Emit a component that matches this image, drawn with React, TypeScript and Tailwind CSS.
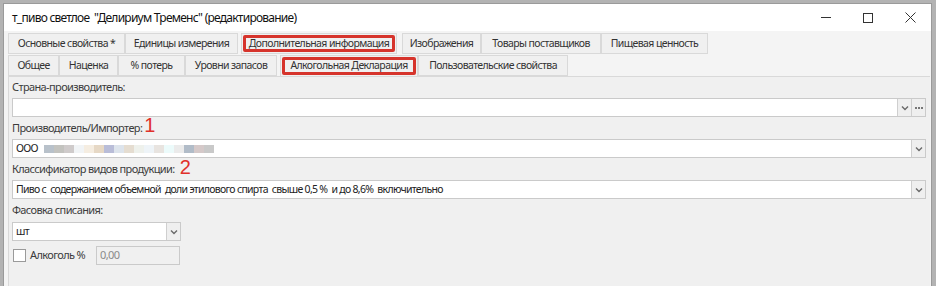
import React from "react";

const font = { fontFamily: '"Noto Sans", "Open Sans", sans-serif' };

function Tab({ label, w, active, marked }: { label: string; w: number; active?: boolean; marked?: boolean }) {
  return (
    <div
      style={{ width: w }}
      className={
        "relative flex h-full shrink-0 items-center justify-center whitespace-nowrap border border-[#d9d9d9] bg-[#f0f0f0] text-[10.5px] tracking-[-0.6px] text-[#333] " +
        (active ? "border-b-0" : "")
      }
    >
      {label}
      {marked && (
        <div className="absolute inset-x-[1px] inset-y-[1px] rounded-[2px] border-[3px] border-[#d6342c]" />
      )}
    </div>
  );
}

function DropBtn() {
  return (
    <div className="flex w-[14px] shrink-0 items-center justify-center border-l border-[#cfcfcf] bg-[#efefef]">
      <svg width="8" height="6" viewBox="0 0 8 6">
        <path d="M1 1.5 L4 4.5 L7 1.5" fill="none" stroke="#6a6a6a" strokeWidth="1.4" />
      </svg>
    </div>
  );
}

function Field({ children, extra }: { children?: React.ReactNode; extra?: boolean }) {
  return (
    <div className="flex h-[19px] border border-[#cacaca] bg-white">
      <div className="flex flex-1 items-center whitespace-nowrap pl-[3px] text-[10.5px] tracking-[-0.7px] text-[#222]">{children}</div>
      <DropBtn />
      {extra && (
        <div className="flex w-[14px] shrink-0 items-center justify-center gap-[1px] border-l border-[#cfcfcf] bg-[#efefef]">
          <span className="h-[2px] w-[2px] bg-[#777]" />
          <span className="h-[2px] w-[2px] bg-[#777]" />
          <span className="h-[2px] w-[2px] bg-[#777]" />
        </div>
      )}
    </div>
  );
}

const blur = [
  "#b8c1ca", "#c3c3bf", "#cfcbcb", "#f1f4f6", "#f5ede1", "#e6d8c5", "#b9bdd8", "#dde4ec",
  "#e5ddd1", "#eef1ec", "#eef4f8", "#e8e4e0", "#ecfbfb", "#ebebeb", "#b1bcc8", "#d5c9c9", "#c9c9c9",
];

export default function App() {
  return (
    <div style={font} className="h-[286px] w-[936px] overflow-hidden bg-[#b3b3b3] pl-[3px] pt-[3px]">
      <div className="flex h-[283px] w-[929px] flex-col border-l border-r border-t border-[#9a9a9a] bg-white">
        {/* title bar */}
        <div className="flex h-[27px] shrink-0 items-center bg-white pl-[8px] text-[12px] tracking-[-0.75px] text-[#111]">
          <span className="flex-1">т_пиво светлое&nbsp; "Делириум Тременс" (редактирование)</span>
          <div className="flex h-full items-center">
            <div className="flex w-[42px] justify-center">
              <div className="h-[1px] w-[10px] bg-[#333]" />
            </div>
            <div className="flex w-[42px] justify-center">
              <div className="h-[10px] w-[10px] border border-[#333]" />
            </div>
            <div className="flex w-[42px] justify-center">
              <svg width="11" height="11" viewBox="0 0 11 11">
                <path d="M0.5 0.5 L10.5 10.5 M10.5 0.5 L0.5 10.5" stroke="#333" strokeWidth="1" />
              </svg>
            </div>
          </div>
        </div>
        {/* tabs */}
        <div className="flex-1 bg-[#f4f4f4] pl-[4px] pt-[2px]">
          <div className="flex h-[21px]">
            <Tab label="Основные свойства *" w={117} />
            <Tab label="Единицы измерения" w={113} />
            <div className="w-[3px]" />
            <Tab label="Дополнительная информация" w={156} marked />
            <div className="w-[5px]" />
            <Tab label="Изображения" w={79} />
            <Tab label="Товары поставщиков" w={120} />
            <Tab label="Пищевая ценность" w={107} />
          </div>
          <div className="mt-[1px] flex h-[21px]">
            <Tab label="Общее" w={51} />
            <Tab label="Наценка" w={59} />
            <Tab label="% потерь" w={67} />
            <Tab label="Уровни запасов" w={92} />
            <div className="w-[3px]" />
            <Tab label="Алкогольная Декларация" w={138} marked active />
            <Tab label="Пользовательские свойства" w={150} />
          </div>
          {/* panel */}
          <div className="h-[220px] w-[922px] border-l border-t border-[#d9d9d9] bg-[#f0f0f0] pl-[3px] pr-[4px] text-[11px] tracking-[-0.62px] text-[#3c3c3c]">
            <div className="flex h-[21px] items-center">Страна-производитель:</div>
            <Field extra />
            <div className="flex h-[22px] items-center">
              Производитель/Импортер:
              <span className="ml-[2px] mt-[-6px] text-[20px] leading-none tracking-normal text-[#e0302a]" style={{ fontFamily: '"Liberation Sans", sans-serif' }}>1</span>
            </div>
            <Field>
              <span className="mr-[6px]">ООО</span>
              <span className="flex h-[8px]">
                {blur.map((c, i) => (
                  <span key={i} style={{ background: c }} className="h-full w-[10px]" />
                ))}
              </span>
            </Field>
            <div className="flex h-[22px] items-center">
              Классификатор видов продукции:
              <span className="ml-[5px] mt-[-4px] text-[20px] leading-none tracking-normal text-[#e0302a]" style={{ fontFamily: '"Liberation Sans", sans-serif' }}>2</span>
            </div>
            <Field>Пиво с&nbsp; содержанием объемной&nbsp; доли этилового спирта&nbsp; свыше 0,5 %&nbsp; и до 8,6%&nbsp; включительно</Field>
            <div className="flex h-[23px] items-center">Фасовка списания:</div>
            <div className="w-[169px]">
              <Field>шт</Field>
            </div>
            <div className="mt-[5px] flex items-center">
              <div className="ml-[1px] h-[13px] w-[13px] border border-[#9a9a9a] bg-white" />
              <span className="ml-[4px] w-[66px]">Алкоголь %</span>
              <div className="flex h-[19px] w-[84px] items-center border border-[#cacaca] bg-[#f0f0f0] pl-[3px] text-[#8a8a8a]">0,00</div>
            </div>
          </div>
        </div>
      </div>
    </div>
  );
}
